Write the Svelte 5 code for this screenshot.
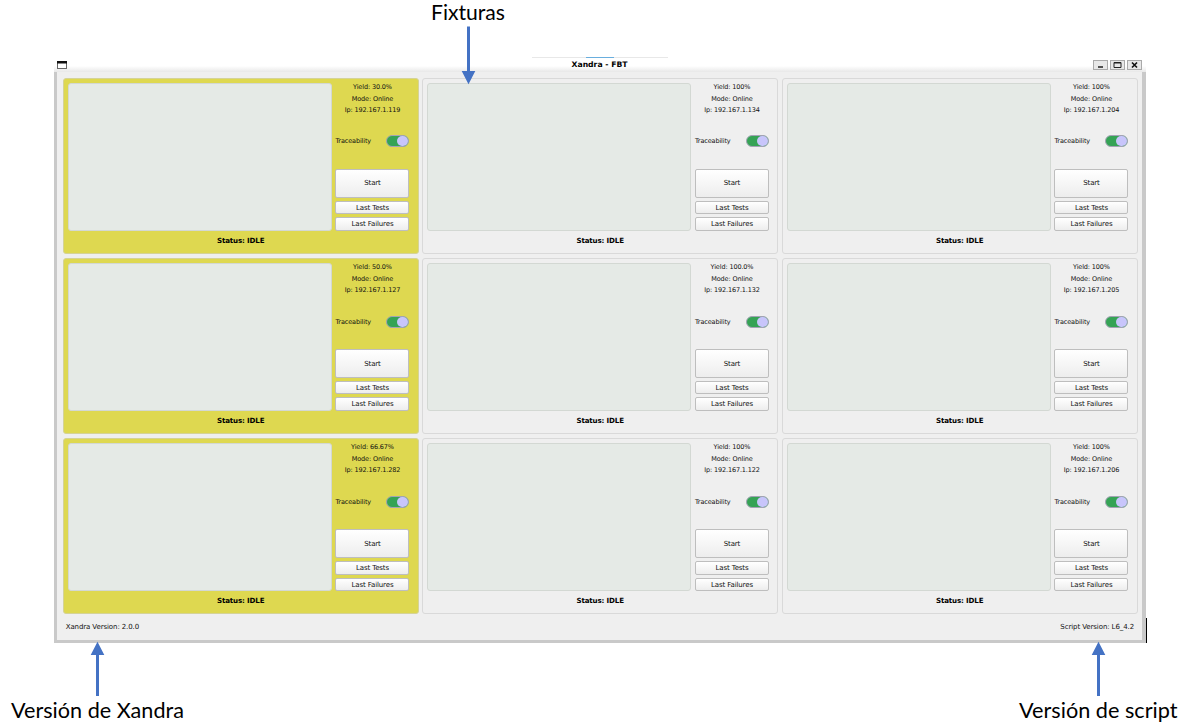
<script>
  const fixtures = [
    { yieldRate: '30.0%', ip: '192.167.1.119', low: true },
    { yieldRate: '100%', ip: '192.167.1.134' },
    { yieldRate: '100%', ip: '192.167.1.204' },
    { yieldRate: '50.0%', ip: '192.167.1.127', low: true },
    { yieldRate: '100.0%', ip: '192.167.1.132' },
    { yieldRate: '100%', ip: '192.167.1.205' },
    { yieldRate: '66.67%', ip: '192.167.1.282', low: true },
    { yieldRate: '100%', ip: '192.167.1.122' },
    { yieldRate: '100%', ip: '192.167.1.206' }
  ];
</script>

<main class="page">
  <div class="window">
    <header class="titlebar">
      <svg class="menu" width="10" height="8" viewBox="0 0 10 8"><rect x=".5" y=".5" width="9" height="7" fill="#fff" stroke="#666" /><path d="M0 0H10V2.500H0Z" fill="#111" /></svg>
      <span class="title">Xandra - FBT</span>
      <div class="controls">
        <span class="control"><svg width="15" height="10" viewBox="0 0 15 10"><path d="M5 7H10" stroke="#111" stroke-width="1.4" /></svg></span>
        <span class="control"><svg width="15" height="10" viewBox="0 0 15 10"><path d="M4 2.5H11V7.5H4ZM4 3H11" fill="none" stroke="#222" /></svg></span>
        <span class="control"><svg width="15" height="10" viewBox="0 0 15 10"><path d="M5 2.5L10 7.5M10 2.5L5 7.5" stroke="#111" stroke-width="1.6" /></svg></span>
      </div>
    </header>
    <div class="body">
      <div class="grid">
        {#each fixtures as f}
          <section class="card" class:low={f.low}>
            <div class="top">
              <div class="screen"></div>
              <div class="side">
                <div class="info">
                  <span>Yield: {f.yieldRate}</span>
                  <span>Mode: Online</span>
                  <span>Ip: {f.ip}</span>
                </div>
                <div class="trace"><span>Traceability</span><i class="toggle"><b></b></i></div>
                <button class="start">Start</button>
                <button>Last Tests</button>
                <button>Last Failures</button>
              </div>
            </div>
            <div class="status">Status: IDLE</div>
          </section>
        {/each}
      </div>
      <footer><span>Xandra Version: 2.0.0</span><span>Script Version: L6_4.2</span></footer>
    </div>
  </div>

  <svg class="notes" width="1181" height="727" viewBox="0 0 1181 727">
    <path d="M532 57.5H668" stroke="#e8e8e8" />
    <path d="M586 57.5H614" stroke="#69aede" />
    <path d="M1146.5 618V643" stroke="#000" />
    <g fill="#4472c4">
      <path d="M467 26.5H470V71H475.3L468.5 84.3L461.7 71H467Z" />
      <path d="M96 696H99V655H104.3L97.5 641.7L90.7 655H96Z" />
      <path d="M1097 696H1100V655H1105.3L1098.5 641.7L1091.7 655H1097Z" />
    </g>
    <text x="431" y="20" textLength="74" lengthAdjust="spacingAndGlyphs">Fixturas</text>
    <text x="11" y="718" textLength="173" lengthAdjust="spacingAndGlyphs">Versión de Xandra</text>
    <text x="1019" y="718" textLength="158.500" lengthAdjust="spacingAndGlyphs">Versión de script</text>
  </svg>
</main>

<style>
  :global(body) { margin: 0; background: #fff; overflow: hidden; }
  .page { position: relative; box-sizing: border-box; width: 1181px; height: 727px; padding: 57px 0 0 54px; font-family: "DejaVu Sans", sans-serif; font-size: 6.5px; letter-spacing: -0.13px; color: #111; }
  .window { width: 1092px; }
  .titlebar { display: grid; grid-template-columns: 60px 1fr 60px; align-items: center; height: 15px; box-sizing: border-box; padding: 2px 4px 1px 3px; background: linear-gradient(#fff 60%, #e8e8e8); }
  .menu { display: block; }
  .title { text-align: center; font-weight: bold; font-size: 7.7px; line-height: 9px; letter-spacing: 0; padding-bottom: 1px; color: #000; }
  .controls { display: flex; gap: 2px; justify-content: flex-end; }
  .control { box-sizing: border-box; width: 15px; height: 10px; display: flex; align-items: center; justify-content: center; outline: 1px solid #aaa; outline-offset: -1px; background: #e8e8e8; }
  .control svg { display: block; }
  .body { box-sizing: border-box; height: 571px; padding: 5.700px 4px 0 5.700px; background: #efefef; border: solid #c9c9c9; border-width: 0 4px 3px 3px; }
  .grid { display: grid; grid-template-columns: repeat(3, 356px); column-gap: 3.5px; row-gap: 4.2px; }
  .card { box-sizing: border-box; height: 176px; padding: 4px; border: 1px solid #d9d9d9; border-radius: 3px; background: #efefef; }
  .card.low { background: #ded850; border-color: #d5d397; }
  .top { display: flex; gap: 3.800px; height: 148px; }
  .screen { box-sizing: border-box; width: 264px; height: 148px; border: 1px solid #d3d8d3; border-radius: 3px; background: #e5eae6; }
  .side { width: 74px; display: flex; flex-direction: column; gap: 3px; }
  .info { height: 32px; display: flex; flex-direction: column; text-align: center; line-height: 11.500px; margin-top: -0.6px; }
  .trace { display: flex; justify-content: space-between; align-items: center; height: 12px; margin: 18.400px 0 18.200px; }
  .toggle { box-sizing: border-box; width: 23px; height: 12px; border: 1px solid #a3a3b4; border-radius: 6px; background: #35a355; display: flex; justify-content: flex-end; }
  .toggle b { width: 11px; height: 10px; border-radius: 5px; background: #c8c5fb; }
  button { box-sizing: border-box; width: 74px; height: 13.500px; flex: none; padding: 0.500px 0 0; font: 7px "DejaVu Sans", sans-serif; letter-spacing: -0.12px; color: #111; border: 1px solid #bebebe; border-radius: 2px; background: linear-gradient(#fff, #ededed); }
  .start { height: 29px; }
  .status { height: 19px; line-height: 20px; text-align: center; font-weight: bold; font-size: 7.1px; letter-spacing: -0.15px; color: #000; }
  footer { display: flex; justify-content: space-between; padding: 7px 4px 0 3px; font-size: 7px; letter-spacing: -0.1px; line-height: 12px; }
  .notes { position: absolute; inset: 0; pointer-events: none; font: 20.5px Lato, "Noto Sans", sans-serif; letter-spacing: 0; fill: #000; }
</style>
